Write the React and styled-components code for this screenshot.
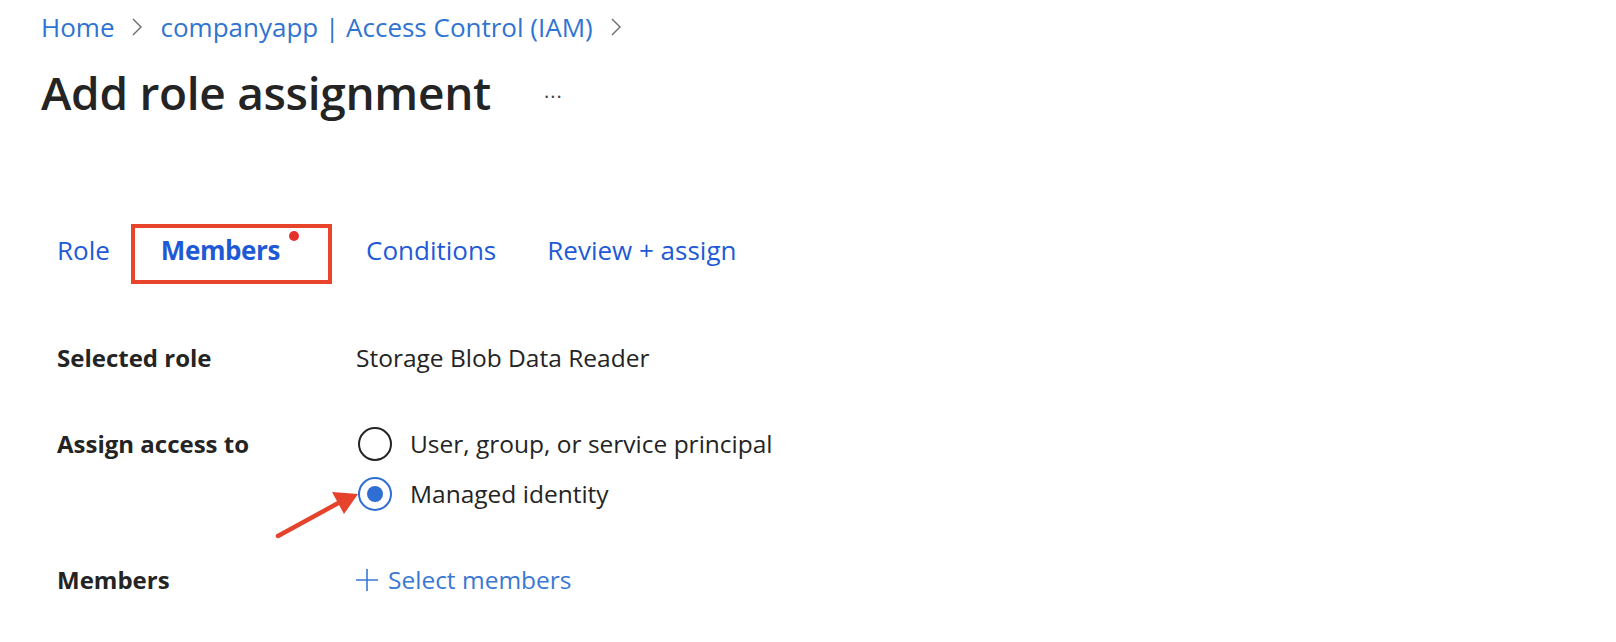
import React from 'react';
import styled, { createGlobalStyle } from 'styled-components';

const GlobalStyle = createGlobalStyle`
  body {
    margin: 0;
    background: #ffffff;
    font-family: "Open Sans", "Liberation Sans", sans-serif;
    color: #242424;
  }
`;

const Page = styled.div`
  position: relative;
  padding: 9px 0 0 41px;
  min-height: 642px;
  box-sizing: border-box;
`;

const Breadcrumb = styled.nav`
  display: flex;
  align-items: center;
  gap: 17px;
  height: 36px;
  font-size: 26px;
`;

const Crumb = styled.a`
  color: #2f74d0;
  text-decoration: none;
`;

const Chevron = styled.svg`
  width: 12px;
  height: 20px;
  color: #6b6b6b;
`;

const TitleRow = styled.div`
  display: flex;
  align-items: center;
  margin-top: 17px;
  height: 60px;
`;

const Title = styled.h1`
  margin: 0;
  font-size: 46px;
  font-weight: 600;
  letter-spacing: -0.3px;
  color: #242424;
`;

const MoreButton = styled.span`
  margin: 8px 0 0 53px;
  font-size: 20px;
  color: #444;
  letter-spacing: 1px;
`;

const Tabs = styled.div`
  display: flex;
  gap: 51px;
  margin-top: 110px;
  margin-left: 16px;
`;

const Tab = styled.div`
  position: relative;
  padding: 0 ${(p) => (p.$dot ? '35px' : '0')} 12px 0;
  font-size: 26px;
  line-height: 36px;
  font-weight: ${(p) => (p.$active ? 700 : 400)};
  letter-spacing: ${(p) => (p.$active ? '-0.4px' : '0')};
  color: #1f5ad6;
  border-bottom: 3px solid ${(p) => (p.$active ? '#3b6fd6' : 'transparent')};
`;

const Dot = styled.span`
  position: absolute;
  top: -1px;
  right: 16px;
  width: 10px;
  height: 10px;
  border-radius: 50%;
  background: #e5322b;
`;

const Highlight = styled.span`
  position: absolute;
  left: -30px;
  right: -17px;
  top: -8px;
  bottom: -4px;
  border: 4px solid #e8432b;
  pointer-events: none;
`;

const Form = styled.div`
  display: grid;
  grid-template-columns: 299px 1fr;
  row-gap: 50px;
  margin-top: 57px;
  margin-left: 16px;
  font-size: 24.5px;
  line-height: 36px;
`;

const Label = styled.div`
  font-size: 24px;
  font-weight: 700;
  color: #242424;
`;

const Value = styled.div`
  color: #242424;
`;

const RadioGroup = styled.div`
  display: flex;
  flex-direction: column;
  gap: 14px;
`;

const RadioOption = styled.label`
  display: flex;
  align-items: center;
  gap: 18px;
`;

const RadioCircle = styled.span`
  box-sizing: border-box;
  width: 34px;
  height: 34px;
  margin-left: 2px;
  border-radius: 50%;
  border: 2px solid ${(p) => (p.$checked ? '#2f6fd3' : '#242424')};
  display: flex;
  align-items: center;
  justify-content: center;

  &::after {
    content: '';
    width: 16px;
    height: 16px;
    border-radius: 50%;
    background: ${(p) => (p.$checked ? '#2f6fd3' : 'transparent')};
  }
`;

const AddLink = styled.a`
  display: flex;
  align-items: center;
  gap: 10px;
  color: #3a78d4;
  text-decoration: none;
`;

const PlusIcon = styled.svg`
  width: 22px;
  height: 22px;
`;

const Arrow = styled.svg`
  position: absolute;
  left: 270px;
  top: 484px;
  width: 100px;
  height: 60px;
  overflow: visible;
`;

const ChevronIcon = () => (
  <Chevron viewBox="0 0 12 20" fill="none">
    <path d="M2 2l8 8-8 8" stroke="currentColor" strokeWidth="1.4" />
  </Chevron>
);

const App = () => (
  <Page>
    <GlobalStyle />
    <Breadcrumb>
      <Crumb>Home</Crumb>
      <ChevronIcon />
      <Crumb>companyapp | Access Control (IAM)</Crumb>
      <ChevronIcon />
    </Breadcrumb>
    <TitleRow>
      <Title>Add role assignment</Title>
      <MoreButton>···</MoreButton>
    </TitleRow>
    <Tabs>
      <Tab>Role</Tab>
      <Tab $active $dot>
        Members
        <Dot />
        <Highlight />
      </Tab>
      <Tab>Conditions</Tab>
      <Tab>Review + assign</Tab>
    </Tabs>
    <Form>
      <Label>Selected role</Label>
      <Value>Storage Blob Data Reader</Value>
      <Label>Assign access to</Label>
      <RadioGroup>
        <RadioOption>
          <RadioCircle />
          <span>User, group, or service principal</span>
        </RadioOption>
        <RadioOption>
          <RadioCircle $checked />
          <span>Managed identity</span>
        </RadioOption>
      </RadioGroup>
      <Label>Members</Label>
      <AddLink>
        <PlusIcon viewBox="0 0 22 22">
          <path d="M11 0v22M0 11h22" stroke="currentColor" strokeWidth="1.6" />
        </PlusIcon>
        <span>Select members</span>
      </AddLink>
    </Form>
    <Arrow viewBox="0 0 100 60">
      <path d="M8 52 L72 17" stroke="#e5432b" strokeWidth="4.5" strokeLinecap="round" />
      <path d="M88 10 L62 8 L74 30 Z" fill="#e5432b" />
    </Arrow>
  </Page>
);

export default App;
